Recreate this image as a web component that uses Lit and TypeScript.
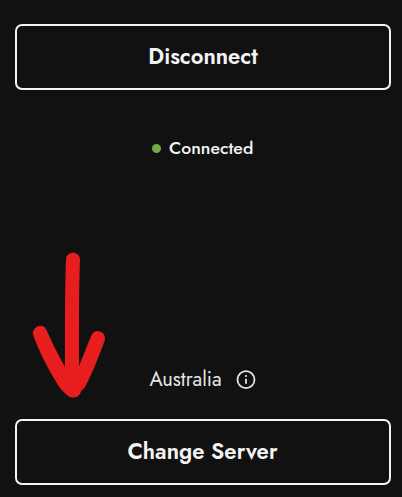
import { LitElement, html, css, svg } from "lit";
import { customElement } from "lit/decorators.js";

@customElement("app-root")
export class AppRoot extends LitElement {
  static styles = css`
    :host {
      display: flex;
      flex-direction: column;
      position: relative;
      box-sizing: border-box;
      width: 402px;
      height: 497px;
      padding: 24px 11px 12px 15px;
      overflow: hidden;
      background: #111111;
      color: #f4f4f4;
      font-family: Jost, Lato, sans-serif;
    }
    .button {
      display: block;
      box-sizing: border-box;
      flex: none;
      width: 376px;
      height: 66px;
      margin: 0;
      padding: 0 0 2px;
      border: 2px solid #f4f4f4;
      border-radius: 7px;
      background: transparent;
      color: inherit;
      font: 600 22.1px/60px Jost, Lato, sans-serif;
      text-align: center;
    }
    .change { padding-right: 1px; }
    .status {
      display: flex;
      align-items: center;
      height: 24px;
      margin: 46px 0 0 136.5px;
      font-size: 17.7px;
      font-weight: 500;
      line-height: 24px;
    }
    .dot {
      width: 9px;
      height: 9px;
      margin-right: 8.5px;
      border-radius: 50%;
      background: #6fac46;
    }
    .location {
      display: flex;
      align-items: center;
      height: 28px;
      margin: auto 0 25px 134.5px;
      font-size: 20px;
      line-height: 28px;
      color: #e6e6e6;
    }
    .info {
      width: 20px;
      height: 20px;
      margin-left: 14px;
    }
    .arrow {
      position: absolute;
      left: 20px;
      top: 240px;
      width: 100px;
      height: 170px;
    }
  `;

  render() {
    return html`
      <button class="button disconnect">Disconnect</button>
      <div class="status"><span class="dot"></span><span class="connected">Connected</span></div>
      <div class="location">
        <span class="country">Australia</span>
        <svg class="info" viewBox="0 0 20 20" fill="none" stroke="#e6e6e6">
          ${svg`<circle cx="10" cy="9.7" r="8.5" stroke-width="1.8"/>
          <path d="M10 8.8v5" stroke-width="1.8"/>
          <circle cx="10" cy="6" r="1.1" fill="#e6e6e6" stroke="none"/>`}
        </svg>
      </div>
      <button class="button change">Change Server</button>
      <svg class="arrow" viewBox="0 0 100 170" fill="#e81e1e">
        <path d="M46 19.500C46 10.500 60 10.500 60 19.500C59 45 59 80 59 126L71.500 95C75 87.500 87 91.500 84.700 100.500C79 116 72 134 65 147C63 150 61 150 60.500 153C58 158.500 51 159 47 155C43 152 39 147 37 143.500C29 130 20 114 13.500 96C10.500 87 22 82 26 89C32 102 38 115 45 127C45 85 45 43 46 19.500Z"/>
      </svg>
    `;
  }
}
